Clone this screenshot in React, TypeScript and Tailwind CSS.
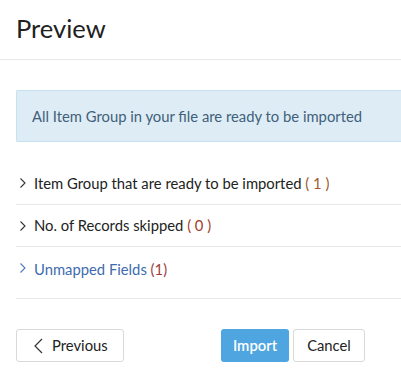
import React from "react";

function Chevron({ color }: { color: string }) {
  return (
    <svg width="8" height="12" viewBox="0 0 8 12" className="shrink-0">
      <path d="M1.5 1.5 L6 6 L1.5 10.5" fill="none" stroke={color} strokeWidth="1.1" />
    </svg>
  );
}

export default function App() {
  return (
    <div className="w-[401px] h-[377px] bg-white overflow-hidden text-[#222]" style={{ fontFamily: "Lato, 'Open Sans', sans-serif" }}>
      <div className="h-[60px] border-b border-[#e8e8e8] px-[16px] flex items-center">
        <h1 className="text-[25.5px] leading-none text-[#212121] pb-[2px]">Preview</h1>
      </div>
      <div className="pl-[16px]">
        <div className="mt-[30px] h-[52px] bg-[#deedf5] border border-r-0 border-[#c4e3ee] rounded-l-[2px] flex items-center pl-[15px] text-[14.8px] text-[#41607a]">
          All Item Group in your file are ready to be imported
        </div>
        <div className="mt-[21px]">
          <div className="h-[42px] border-b border-[#e8e8e8] flex items-center gap-[7px] pl-[3px] text-[14.8px] pb-[1px]">
            <Chevron color="#333" />
            <span>Item Group that are ready to be imported <span className="text-[#9c5a2d]">( 1 )</span></span>
          </div>
          <div className="h-[42px] border-b border-[#e8e8e8] flex items-center gap-[7px] pl-[3px] text-[14.8px]">
            <Chevron color="#333" />
            <span>No. of Records skipped <span className="text-[#a0422a]">( 0 )</span></span>
          </div>
          <div className="h-[52px] border-b border-[#e8e8e8] flex items-start pt-[11px] gap-[7px] pl-[3px] text-[14.8px]">
            <span className="mt-[4px]"><Chevron color="#4a7ab8" /></span>
            <span className="text-[#3d6bb0]">Unmapped Fields <span className="text-[#9b3e3e]">(1)</span></span>
          </div>
        </div>
        <div className="mt-[30px] flex items-center pr-[36px]">
          <button className="h-[33px] w-[108px] border border-[#d9d9d9] rounded-[3px] flex items-center gap-[9px] pl-[17px] text-[14.8px] text-[#222]">
            <svg width="9" height="16" viewBox="0 0 9 16"><path d="M8 1 L1 8 L8 15" fill="none" stroke="#333" strokeWidth="1.2" /></svg>
            Previous
          </button>
          <div className="flex-1" />
          <button className="h-[33px] w-[68px] bg-[#4ea5e0] rounded-[3px] text-white text-[14.8px] font-semibold">Import</button>
          <button className="ml-[4px] h-[33px] w-[72px] border border-[#d9d9d9] rounded-[3px] text-[14.8px] text-[#222]">Cancel</button>
        </div>
      </div>
    </div>
  );
}
